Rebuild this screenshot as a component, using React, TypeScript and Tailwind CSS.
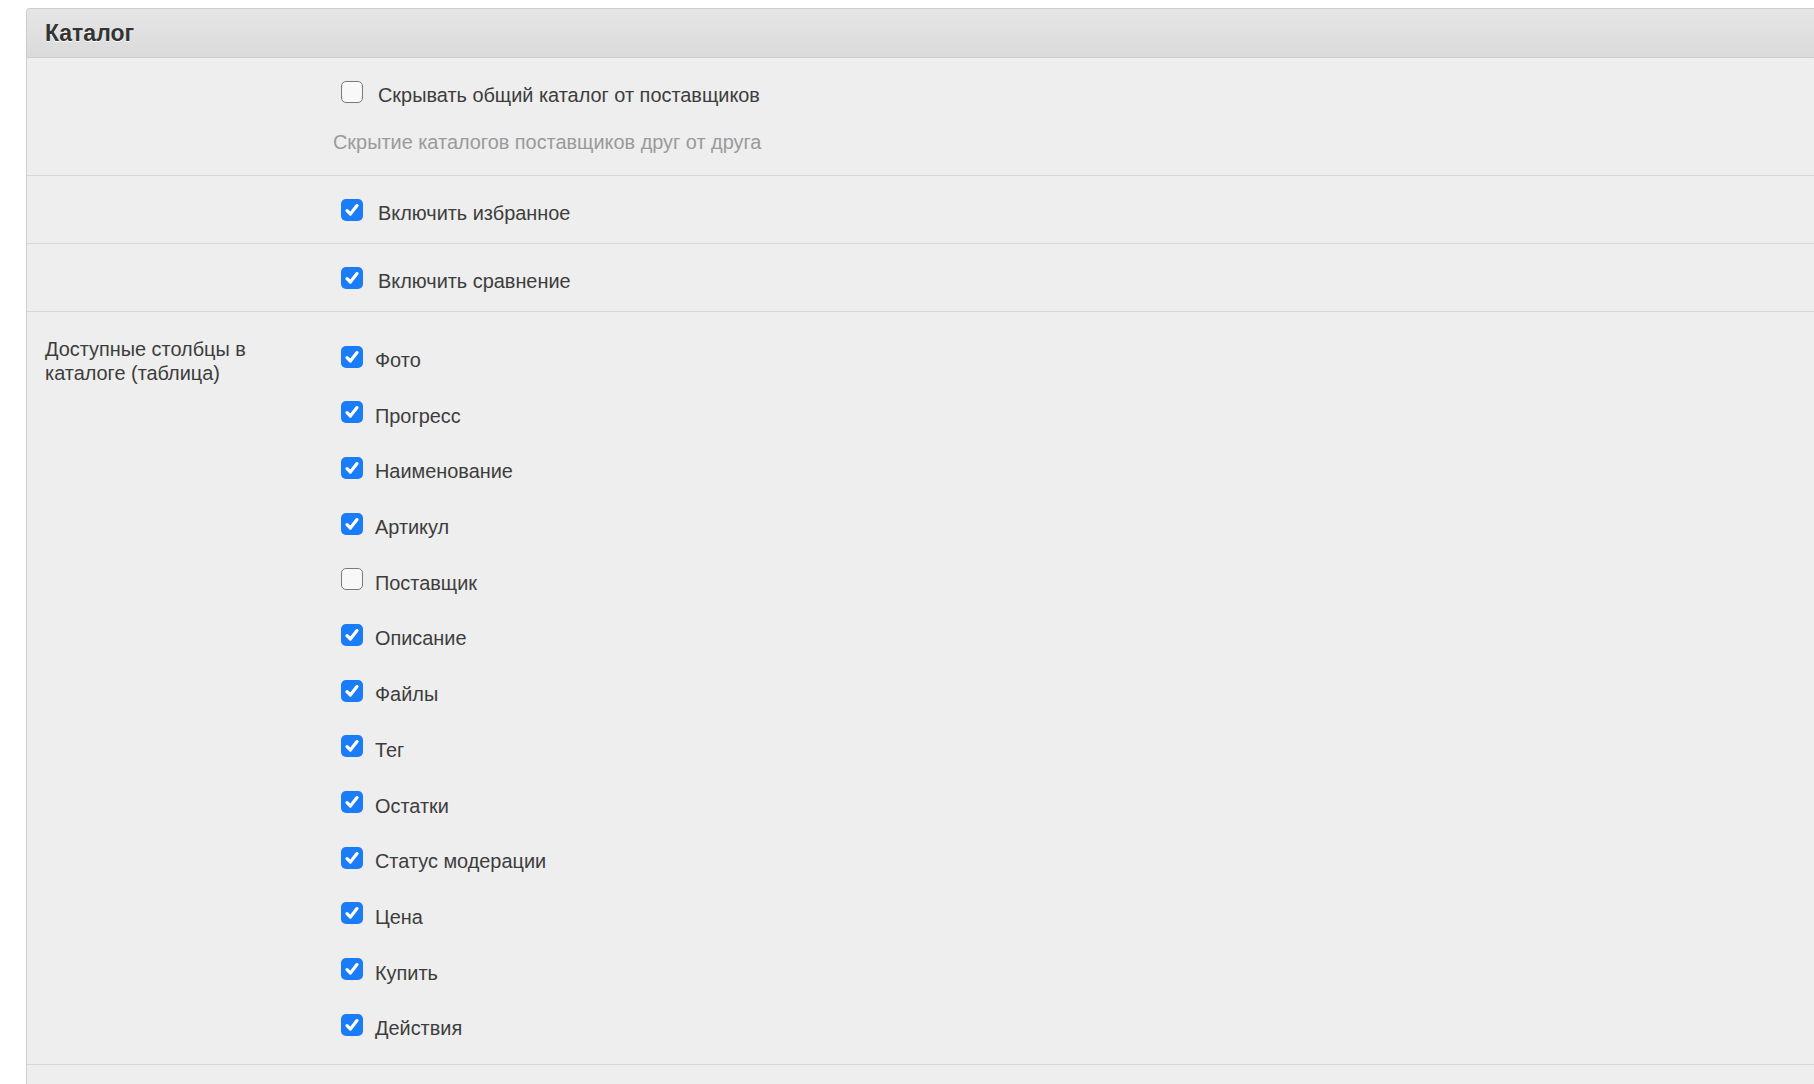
import React from "react";

const columns: { label: string; checked: boolean }[] = [
  { label: "Фото", checked: true },
  { label: "Прогресс", checked: true },
  { label: "Наименование", checked: true },
  { label: "Артикул", checked: true },
  { label: "Поставщик", checked: false },
  { label: "Описание", checked: true },
  { label: "Файлы", checked: true },
  { label: "Тег", checked: true },
  { label: "Остатки", checked: true },
  { label: "Статус модерации", checked: true },
  { label: "Цена", checked: true },
  { label: "Купить", checked: true },
  { label: "Действия", checked: true },
];

function Box({ checked }: { checked: boolean }) {
  if (!checked) {
    return (
      <span className="w-[22px] h-[22px] rounded-[5px] border-[1.5px] border-[#7a7a7a] bg-[#f8f8f8] flex-shrink-0 mb-[7px]" />
    );
  }
  return (
    <span className="w-[22px] h-[22px] rounded-[5px] bg-[#1a7cf7] flex items-center justify-center flex-shrink-0 mb-[7px]">
      <svg width="16" height="16" viewBox="0 0 16 16" fill="none">
        <path
          d="M3 8.6 L6.4 12 L13 3.6"
          stroke="white"
          strokeWidth="3.2"
          strokeLinecap="round"
          strokeLinejoin="round"
        />
      </svg>
    </span>
  );
}

function CheckRow({ label, checked, gap }: { label: string; checked: boolean; gap: string }) {
  return (
    <label className={`flex items-center h-[26px] ${gap} leading-[26px] ml-[8px]`}>
      <Box checked={checked} />
      <span>{label}</span>
    </label>
  );
}

export default function App() {
  return (
    <div
      className="min-h-screen bg-white pt-[8px] overflow-hidden text-[19.9px] text-[#3d3d3d]"
      style={{ fontFamily: '"Liberation Sans", Arial, sans-serif' }}
    >
      <div className="ml-[26px] w-[1800px] border-l border-t border-[#cdcdcd] rounded-tl-[4px] bg-[#eeeeee]">
        {/* заголовок */}
        <div className="h-[49px] flex items-center pl-[18px] bg-gradient-to-b from-[#e6e6e6] to-[#dadada] border-b border-[#cfcfcf] rounded-tl-[4px]">
          <h2 className="text-[23px] font-bold text-[#333] [text-shadow:0_1px_0_#fff]">Каталог</h2>
        </div>

        {/* скрывать каталог */}
        <div className="flex pl-[18px] pt-[24px] pb-[20px] border-b border-[#d6d6d6]">
          <div className="w-[288px]" />
          <div className="flex flex-col gap-[21px]">
            <CheckRow label="Скрывать общий каталог от поставщиков" checked={false} gap="gap-[15px]" />
            <p className="leading-[26px] text-[#9a9a9a]">Скрытие каталогов поставщиков друг от друга</p>
          </div>
        </div>

        {/* избранное */}
        <div className="flex pl-[18px] pt-[24px] pb-[17px] border-b border-[#d6d6d6]">
          <div className="w-[288px]" />
          <CheckRow label="Включить избранное" checked gap="gap-[15px]" />
        </div>

        {/* сравнение */}
        <div className="flex pl-[18px] pt-[24px] pb-[17px] border-b border-[#d6d6d6]">
          <div className="w-[288px]" />
          <CheckRow label="Включить сравнение" checked gap="gap-[15px]" />
        </div>

        {/* столбцы */}
        <div className="flex pl-[18px] pt-[25px] pb-[23px] border-b border-[#d6d6d6]">
          <div className="w-[288px] pr-[30px] leading-[24px]">Доступные столбцы в каталоге (таблица)</div>
          <div className="flex flex-col gap-[29.7px] mt-[10px]">
            {columns.map((c) => (
              <CheckRow key={c.label} label={c.label} checked={c.checked} gap="gap-[12px]" />
            ))}
          </div>
        </div>

        <div className="h-[40px]" />
      </div>
    </div>
  );
}
